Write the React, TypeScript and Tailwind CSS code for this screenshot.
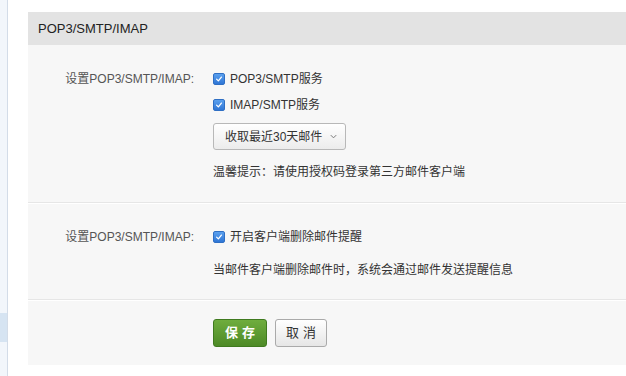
import React from 'react'

const font = { fontFamily: '"Liberation Sans", "Noto Sans CJK SC", sans-serif' }

function Check({ label }: { label: string }) {
  return (
    <div className="flex h-[20px] items-center text-[12px] text-[#333]">
      <span className="mr-[5px] flex h-[12px] w-[12px] items-center justify-center rounded-[2px] border border-[#2f6fc4] bg-gradient-to-b from-[#5aa0ee] to-[#2f76d6]">
        <svg viewBox="0 0 10 10" className="h-[8px] w-[8px]">
          <path d="M2 5.2 L4.2 7.4 L8 2.6" fill="none" stroke="white" strokeWidth="1.6" strokeLinecap="round" strokeLinejoin="round" />
        </svg>
      </span>
      {label}
    </div>
  )
}

function Row({ label, children, className = '' }: { label?: string; children: React.ReactNode; className?: string }) {
  return (
    <div className={`flex ${className}`}>
      <div className="flex h-[20px] w-[166px] shrink-0 items-center justify-end text-[12px] text-[#555]">{label}</div>
      <div className="pl-[19px]">{children}</div>
    </div>
  )
}

export default function App() {
  return (
    <div className="flex h-[376px] w-[626px] overflow-hidden bg-white" style={font}>
      <div className="w-[8px] shrink-0 border-r border-[#d3dce8] bg-[#f2f6fb] pt-[313px]">
        <div className="h-[29px] bg-[#d6e4f2]" />
      </div>

      <div className="flex-1 pl-[20px] pt-[12px]">
        <div className="bg-[#f7f7f7]">
          <div className="flex h-[33px] items-center bg-[#e3e3e3] px-[10px] text-[13px] text-[#222]">POP3/SMTP/IMAP</div>

          <div className="border-b border-[#e6e6e6] pb-[20px] pt-[24px]">
            <Row label="设置POP3/SMTP/IMAP:">
              <Check label="POP3/SMTP服务" />
            </Row>
            <Row className="mt-[6px]">
              <Check label="IMAP/SMTP服务" />
            </Row>
            <Row className="mt-[8px]">
              <button className="flex h-[27px] w-[133px] items-center rounded-[3px] border border-[#b8b8b8] bg-gradient-to-b from-[#ffffff] to-[#ececec] pl-[11px] text-[12px] text-[#333]">
                收取最近30天邮件
                <svg viewBox="0 0 10 10" className="ml-[7px] h-[9px] w-[9px]">
                  <path d="M2 3.5 L5 6.5 L8 3.5" fill="none" stroke="#777" strokeWidth="1.1" />
                </svg>
              </button>
            </Row>
            <Row className="mt-[12px]">
              <div className="flex h-[20px] items-center text-[12px] text-[#333]">温馨提示：请使用授权码登录第三方邮件客户端</div>
            </Row>
          </div>

          <div className="border-b border-t border-b-[#e6e6e6] border-t-white pb-[19px] pt-[23px]">
            <Row label="设置POP3/SMTP/IMAP:">
              <Check label="开启客户端删除邮件提醒" />
            </Row>
            <Row className="mt-[13px]">
              <div className="flex h-[20px] items-center text-[12px] text-[#333]">当邮件客户端删除邮件时，系统会通过邮件发送提醒信息</div>
            </Row>
          </div>

          <div className="border-t border-white pb-[18px] pt-[18px]">
            <Row>
              <div className="flex gap-[8px]">
                <button className="h-[28px] w-[54px] rounded-[3px] border border-[#3f7a1f] bg-gradient-to-b from-[#6fad3e] to-[#4d8a26] pl-[4px] text-[13px] font-bold tracking-[4px] text-white">
                  保存
                </button>
                <button className="h-[28px] w-[52px] rounded-[3px] border border-[#aaa] bg-gradient-to-b from-[#ffffff] to-[#e6e6e6] pl-[4px] text-[13px] tracking-[4px] text-[#333]">
                  取消
                </button>
              </div>
            </Row>
          </div>
        </div>
      </div>
    </div>
  )
}
